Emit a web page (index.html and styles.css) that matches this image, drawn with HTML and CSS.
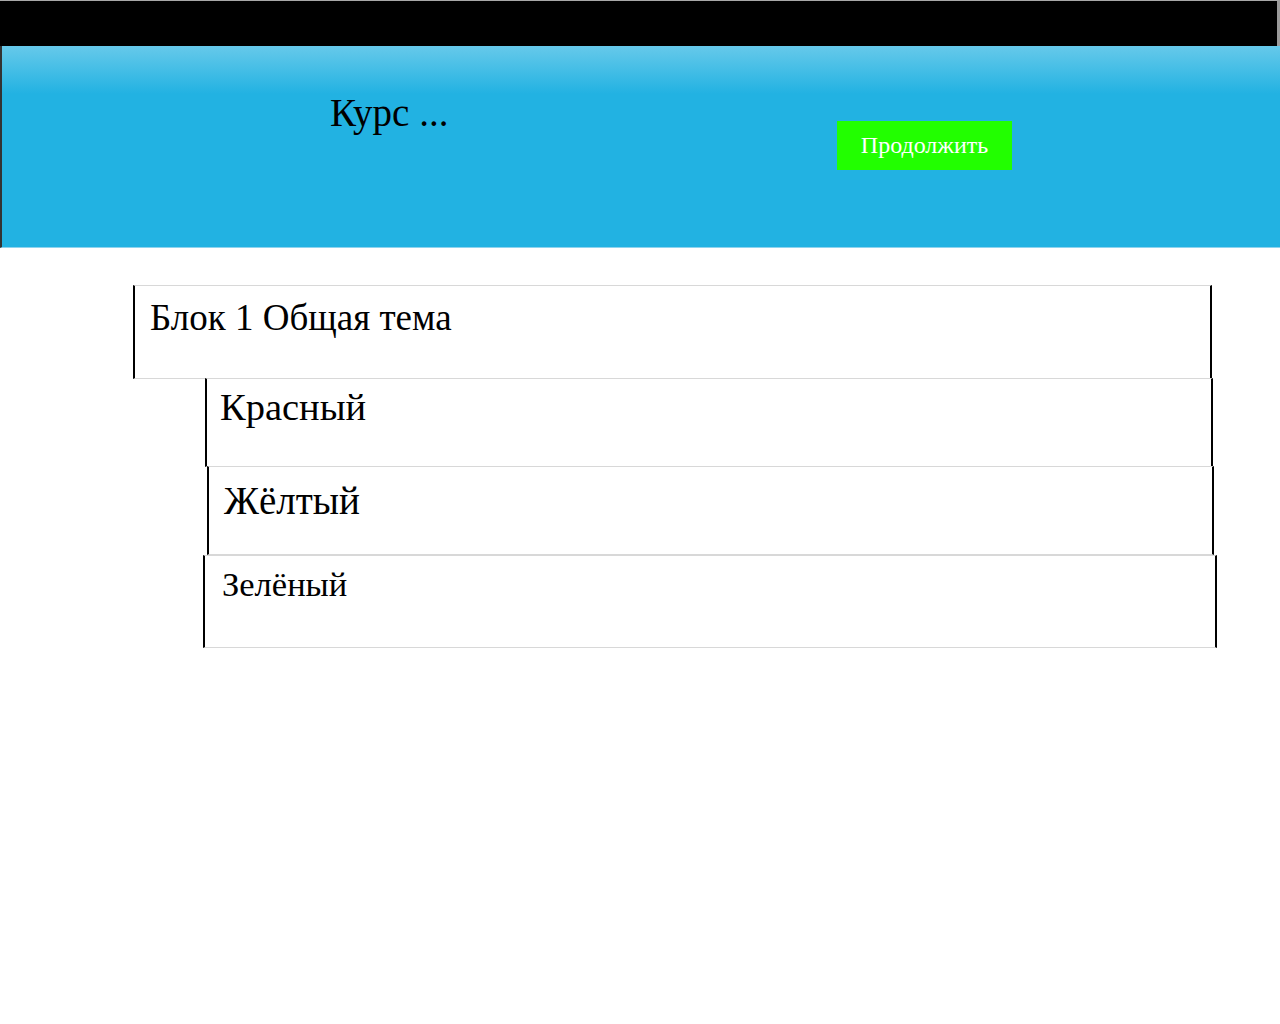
FILE: index.html
```html
<!DOCTYPE html>
<html lang="ru">
<head>
<meta charset="utf-8">
<title>Курс</title>
<link rel="stylesheet" href="styles.css">
</head>
<body>
<div class="topbar"></div>
<header class="hero">
  <h1 class="hero-title">Курс ...</h1>
  <button class="hero-btn" type="button">Продолжить</button>
</header>
<main class="list">
  <div class="row row-block">Блок 1 Общая тема</div>
  <div class="row row-red">Красный</div>
  <div class="row row-yellow">Жёлтый</div>
  <div class="row row-green">Зелёный</div>
</main>
</body>
</html>
```
FILE: styles.css
```css
html, body {
  margin: 0;
  padding: 0;
  background: #fff;
}
body {
  font-family: "Liberation Serif", "Times New Roman", serif;
  color: #000;
}
.topbar {
  height: 45px;
  background: #000;
  border-top: 1px solid #a8a8a8;
  border-right: 3px solid #9a9a9a;
}
.hero {
  height: 202px;
  box-sizing: border-box;
  border-left: 2px solid #333;
  border-bottom: 1px solid #8fd3ee;
  background: linear-gradient(to bottom, #66c9ea 0px, #22b2e2 48px, #22b2e2 100%);
  display: grid;
  grid-template-columns: 507px 175px;
  padding-left: 328px;
  align-items: start;
}
.hero-title {
  margin: 46px 0 0 0;
  font-size: 39px;
  font-weight: normal;
  line-height: 41px;
}
.hero-btn {
  margin-top: 75px;
  width: 175px;
  height: 49px;
  background: #22ff00;
  border: none;
  color: #fff;
  font-family: "Liberation Serif", "Times New Roman", serif;
  font-size: 24px;
  padding: 0;
}
.list {
  padding-top: 37px;
  display: flex;
  flex-direction: column;
  align-items: flex-start;
}
.row {
  box-sizing: border-box;
  border-top: 1px solid #d8d8d8;
  border-bottom: 1px solid #d8d8d8;
  border-left: 2px solid #000;
  border-right: 2px solid #000;
  background: #fff;
}
.row-block {
  margin-left: 133px;
  width: 1079px;
  height: 94px;
  padding: 10px 0 0 15px;
  font-size: 37px;
}
.row-red {
  margin-top: -1px;
  margin-left: 205px;
  width: 1008px;
  height: 89px;
  padding: 6px 0 0 13px;
  font-size: 38.5px;
}
.row-yellow {
  margin-top: -1px;
  margin-left: 207px;
  width: 1007px;
  height: 89px;
  padding: 11px 0 0 15px;
  font-size: 39px;
}
.row-green {
  margin-top: 0px;
  margin-left: 203px;
  width: 1014px;
  height: 93px;
  padding: 9px 0 0 17px;
  font-size: 34.5px;
}
```
